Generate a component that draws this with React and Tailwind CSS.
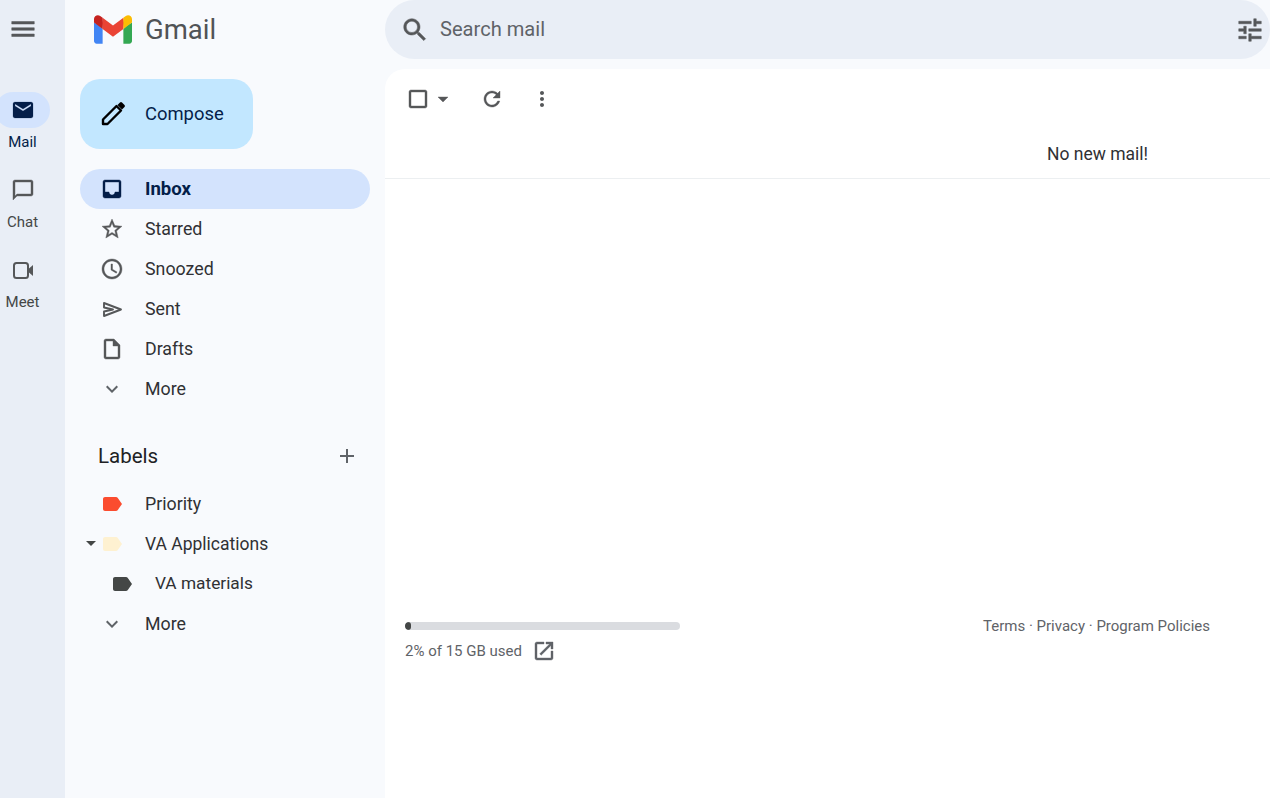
const P = {
  menu: "M3 18h18v-2H3v2zm0-5h18v-2H3v2zm0-7v2h18V6H3z",
  mail: "M20 4H4c-1.1 0-2 .9-2 2v12c0 1.1.9 2 2 2h16c1.1 0 2-.9 2-2V6c0-1.1-.9-2-2-2zm0 4l-8 5-8-5V6l8 5 8-5v2z",
  chat: "M20 2H4c-1.1 0-2 .9-2 2v18l4-4h14c1.1 0 2-.9 2-2V4c0-1.1-.9-2-2-2zm0 14H6l-2 2V4h16v12z",
  inbox: "M19 3H4.99c-1.11 0-1.98.89-1.98 2L3 19c0 1.1.88 2 1.99 2H19c1.1 0 2-.9 2-2V5c0-1.11-.9-2-2-2zm0 12h-4c0 1.66-1.35 3-3 3s-3-1.34-3-3H4.99V5H19v10z",
  star: "M22 9.24l-7.19-.62L12 2 9.19 8.63 2 9.24l5.46 4.73L5.82 21 12 17.27 18.18 21l-1.63-7.03L22 9.24zM12 15.4l-3.76 2.27 1-4.28-3.32-2.88 4.38-.38L12 6.1l1.71 4.04 4.38.38-3.32 2.88 1 4.28L12 15.4z",
  clock: "M11.99 2C6.47 2 2 6.48 2 12s4.47 10 9.99 10C17.52 22 22 17.52 22 12S17.52 2 11.99 2zM12 20c-4.42 0-8-3.58-8-8s3.58-8 8-8 8 3.58 8 8-3.58 8-8 8zm.5-13H11v6l5.25 3.15.75-1.23-4.5-2.67z",
  draft: "M14 2H6c-1.1 0-1.99.9-1.99 2L4 20c0 1.1.89 2 1.99 2H18c1.1 0 2-.9 2-2V8l-6-6zM6 20V4h7v5h5v11H6z",
  down: "M16.59 8.59L12 13.17 7.41 8.59 6 10l6 6 6-6z",
  add: "M19 13h-6v6h-2v-6H5v-2h6V5h2v6h6v2z",
  label: "M17.63 5.84C17.27 5.33 16.67 5 16 5L5 5.01C3.9 5.01 3 5.9 3 7v10c0 1.1.9 1.99 2 1.99L16 19c.67 0 1.27-.33 1.63-.84L22 12l-4.37-6.16z",
  search: "M15.5 14h-.79l-.28-.27C15.41 12.59 16 11.11 16 9.5 16 5.91 13.09 3 9.5 3S3 5.91 3 9.5 5.91 16 9.5 16c1.61 0 3.09-.59 4.23-1.57l.27.28v.79l5 4.99L20.49 19l-4.99-5zm-6 0C7.01 14 5 11.99 5 9.5S7.01 5 9.5 5 14 7.01 14 9.5 11.99 14 9.5 14z",
  tune: "M3 17v2h6v-2H3zM3 5v2h10V5H3zm10 16v-2h8v-2h-8v-2h-2v6h2zM7 9v2H3v2h4v2h2V9H7zm14 4v-2H11v2h10zm-6-4h2V7h4V5h-4V3h-2v6z",
  check: "M19 5v14H5V5h14m0-2H5c-1.1 0-2 .9-2 2v14c0 1.1.9 2 2 2h14c1.1 0 2-.9 2-2V5c0-1.1-.9-2-2-2z",
  drop: "M7 10l5 5 5-5z",
  refresh: "M17.65 6.35C16.2 4.9 14.21 4 12 4c-4.42 0-7.99 3.58-7.99 8s3.57 8 7.99 8c3.73 0 6.84-2.55 7.73-6h-2.08c-.82 2.33-3.04 4-5.65 4-3.31 0-6-2.69-6-6s2.69-6 6-6c1.66 0 3.14.69 4.22 1.78L13 11h7V4l-2.35 2.35z",
  vert: "M12 8c1.1 0 2-.9 2-2s-.9-2-2-2-2 .9-2 2 .9 2 2 2zm0 2c-1.1 0-2 .9-2 2s.9 2 2 2 2-.9 2-2-.9-2-2-2zm0 6c-1.1 0-2 .9-2 2s.9 2 2 2 2-.9 2-2-.9-2-2-2z",
  open: "M19 19H5V5h7V3H5c-1.11 0-2 .9-2 2v14c0 1.1.89 2 2 2h14c1.1 0 2-.9 2-2v-7h-2v7zM14 3v2h3.59l-9.83 9.83 1.41 1.41L19 6.41V10h2V3h-7z",
};

function Icon({ d, className = "w-6 h-6", fill = "#555759", bold = 0.4 }) {
  return (
    <svg viewBox="0 0 24 24" className={`shrink-0 ${className}`} fill={fill} stroke={fill} strokeWidth={bold}>
      <path d={d} />
    </svg>
  );
}

function SendIcon() {
  return (
    <svg viewBox="0 0 24 24" className="w-6 h-6 shrink-0" fill="none" stroke="#555759" strokeWidth="1.9" strokeLinejoin="round">
      <path d="M4 6l17 6.5L4 19v-4.5l9-2-9-2z" />
    </svg>
  );
}

function VideoIcon() {
  return (
    <svg viewBox="0 0 24 24" className="w-6 h-6 shrink-0">
      <rect x="3" y="5" width="14" height="15" rx="2.5" fill="none" stroke="#555759" strokeWidth="2" />
      <path d="M18 10.5l4-3.5v11l-4-3.5z" fill="#555759" />
    </svg>
  );
}

function PencilIcon() {
  return (
    <svg viewBox="0 0 30 30" className="w-[30px] h-[30px] shrink-0 -ml-[1px]">
      <path d="M5 25v-4.5L18.5 7l4.5 4.5L9.5 25z" fill="none" stroke="#000" strokeWidth="2.4" strokeLinejoin="round" />
      <path d="M19.5 6l2.5-2.5q1-1 2 0L26.5 6q1 1 0 2L24 10.5z" fill="#000" />
    </svg>
  );
}

function GmailLogo() {
  return (
    <svg viewBox="0 0 256 193" className="w-[38px] h-[29px] shrink-0">
      <path fill="#4285F4" d="M58.182 192.05V93.14L27.507 65.077 0 49.504v125.091c0 9.658 7.825 17.455 17.455 17.455h40.727Z" />
      <path fill="#34A853" d="M197.818 192.05h40.727c9.659 0 17.455-7.826 17.455-17.455V49.505l-31.156 17.837-27.026 25.798v98.91Z" />
      <path fill="#EA4335" d="m58.182 93.14-4.174-38.647 4.174-36.989L128 69.868l69.818-52.364 4.669 34.992-4.669 40.644L128 145.504z" />
      <path fill="#FBBC04" d="M197.818 17.504V93.14L256 49.504V26.231c0-21.585-24.64-33.89-41.89-20.945l-16.292 12.218Z" />
      <path fill="#C5221F" d="m0 49.504 26.759 20.07L58.182 93.14V17.504L41.89 5.286C24.61-7.66 0 4.646 0 26.23v23.273Z" />
    </svg>
  );
}

function RailItem({ icon, label, active }) {
  return (
    <div className="flex flex-col items-center h-[80px] w-[45px]">
      <div className={`w-[55px] h-[36px] rounded-full flex items-center justify-center shrink-0 ${active ? "bg-[#d3e3fd]" : ""}`}>
        {icon}
      </div>
      <span className={`text-[15px] leading-[20px] mt-[4px] ${active ? "text-[#041e49]" : "text-[#444746]"}`}>{label}</span>
    </div>
  );
}

function NavRow({ icon, label, active }) {
  return (
    <div className={`flex items-center h-[40px] w-[290px] rounded-full pl-[20px] ${active ? "bg-[#d3e3fd]" : ""}`}>
      {icon}
      <span className={`ml-[21px] ${active ? "text-[18.6px] font-bold text-[#041e49] pt-[1px]" : "text-[17.8px] text-[#303134]"}`}>{label}</span>
    </div>
  );
}

function LabelRow({ color, label, indent, caret, textClass }) {
  return (
    <div className="flex items-center h-[40px] w-[290px] relative" style={{ paddingLeft: 20 + indent }}>
      {caret && (
        <svg viewBox="0 0 24 24" className="w-6 h-6 absolute -left-[1px] top-[7px]" fill="#444746">
          <path d={P.drop} />
        </svg>
      )}
      <Icon d={P.label} fill={color} bold={0} />
      <span className={`ml-[21px] text-[#303134] ${textClass}`}>{label}</span>
    </div>
  );
}

const Chevron = () => <Icon d={P.down} fill="#5f6368" bold={0} />;

export default function App() {
  return (
    <div className="flex h-[798px] w-[1270px] overflow-hidden bg-[#f8fafd] font-['Roboto',sans-serif]">
      <aside className="w-[65px] shrink-0 bg-[#e9eef6] flex flex-col items-center pr-[20px]">
        <div className="h-[92px] pt-[14px] shrink-0">
          <Icon d={P.menu} className="w-[30px] h-[30px]" />
        </div>
        <RailItem icon={<Icon d={P.mail} fill="#041e49" bold={0.2} />} label="Mail" active />
        <RailItem icon={<Icon d={P.chat} />} label="Chat" />
        <RailItem icon={<VideoIcon />} label="Meet" />
      </aside>

      <div className="flex-1 flex flex-col min-w-0">
        <header className="flex h-[69px] shrink-0">
          <div className="w-[320px] shrink-0 flex items-start pl-[29px] pt-[15px]">
            <GmailLogo />
            <span className="ml-[13px] text-[27.5px] leading-[30px] text-[#505356]">Gmail</span>
          </div>
          <div className="flex-1 h-[59px] rounded-[30px] bg-[#e9eef6] flex items-center pl-[15px] pr-[5px]">
            <Icon d={P.search} className="w-[30px] h-[30px]" />
            <span className="ml-[10px] -mt-[1px] text-[20.1px] text-[#5f6368] flex-1">Search mail</span>
            <Icon d={P.tune} className="w-[30px] h-[30px]" />
          </div>
        </header>

        <div className="flex flex-1 min-h-0">
          <nav className="w-[320px] shrink-0 flex flex-col pl-[15px]">
            <div className="mt-[10px] w-[173px] h-[70px] rounded-[20px] bg-[#c2e7ff] flex items-center pl-[19px] shrink-0">
              <PencilIcon />
              <span className="ml-[17px] text-[18.4px] text-[#041e49]">Compose</span>
            </div>
            <div className="mt-[20px] flex flex-col">
              <NavRow icon={<Icon d={P.inbox} fill="#041e49" />} label="Inbox" active />
              <NavRow icon={<Icon d={P.star} />} label="Starred" />
              <NavRow icon={<Icon d={P.clock} />} label="Snoozed" />
              <NavRow icon={<SendIcon />} label="Sent" />
              <NavRow icon={<Icon d={P.draft} />} label="Drafts" />
              <NavRow icon={<Chevron />} label="More" />
            </div>
            <div className="mt-[27px] h-[40px] w-[290px] flex items-center justify-between pl-[18px] pr-[11px] shrink-0">
              <span className="text-[20.5px] text-[#202124]">Labels</span>
              <Icon d={P.add} bold={0} fill="#5f6368" />
            </div>
            <div className="mt-[8px] flex flex-col">
              <LabelRow color="#fb4c2f" label="Priority" indent={0} textClass="text-[17.8px]" />
              <LabelRow color="#fef1d1" label="VA Applications" indent={0} caret textClass="text-[17.5px]" />
              <LabelRow color="#444746" label="VA materials" indent={10} textClass="text-[17.3px]" />
              <NavRow icon={<Chevron />} label="More" />
            </div>
          </nav>

          <main className="flex-1 bg-white rounded-tl-[20px] flex flex-col min-w-0">
            <div className="h-[60px] shrink-0 flex items-center pl-[21px]">
              <Icon d={P.check} />
              <Icon d={P.drop} className="w-[24px] h-[24px] ml-[1px]" />
              <Icon d={P.refresh} className="w-[24px] h-[24px] ml-[25px]" />
              <Icon d={P.vert} className="w-[24px] h-[24px] ml-[26px]" bold={0} />
            </div>
            <div className="h-[50px] shrink-0 border-b border-[#eceff1] flex items-center justify-center pl-[540px] pt-[2px]">
              <span className="text-[17.5px] text-[#303134] whitespace-nowrap">No new mail!</span>
            </div>
            <div className="mt-[443px] flex justify-between pl-[20px] pr-[60px]">
              <div className="flex flex-col">
                <div className="w-[275px] h-[8px] rounded-full bg-[#dadce0] overflow-hidden">
                  <div className="w-[6px] h-full rounded-full bg-[#444746]" />
                </div>
                <div className="flex items-center mt-[9px]">
                  <span className="text-[15px] text-[#5f6368]">2% of 15 GB used</span>
                  <Icon d={P.open} className="w-[24px] h-[24px] ml-[10px]" fill="#5f6368" />
                </div>
              </div>
              <div className="text-[15px] text-[#5f6368] -mt-[6px] leading-[20px]">Terms · Privacy · Program Policies</div>
            </div>
          </main>
        </div>
      </div>
    </div>
  );
}
